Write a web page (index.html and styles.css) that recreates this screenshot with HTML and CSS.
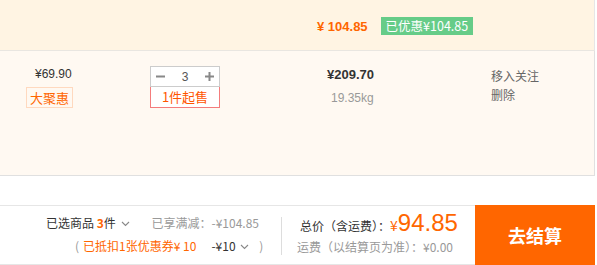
FILE: index.html
```html
<!DOCTYPE html>
<html lang="zh">
<head>
<meta charset="utf-8">
<link rel="stylesheet" href="styles.css">
</head>
<body>
<div class="cart">
  <div class="promo-row">
    <span class="promo-price">¥ 104.85</span>
    <span class="promo-tag">已优惠¥104.85</span>
  </div>
  <div class="item-row">
    <div class="col-price">
      <div class="unit-price">¥69.90</div>
      <span class="deal-tag">大聚惠</span>
    </div>
    <div class="col-qty">
      <div class="qty-box">
        <span class="qty-btn">
          <svg width="9" height="9" viewBox="0 0 9 9"><rect x="0" y="3.5" width="9" height="2" fill="#888"/></svg>
        </span>
        <span class="qty-num">3</span>
        <span class="qty-btn">
          <svg width="9" height="9" viewBox="0 0 9 9"><rect x="0" y="3.5" width="9" height="2" fill="#888"/><rect x="3.5" y="0" width="2" height="9" fill="#888"/></svg>
        </span>
      </div>
      <div class="qty-min">1件起售</div>
    </div>
    <div class="col-sum">
      <div class="sum">¥209.70</div>
      <div class="weight">19.35kg</div>
    </div>
    <div class="col-ops">
      <div class="op">移入关注</div>
      <div class="op">删除</div>
    </div>
  </div>
  <div class="spacer"></div>
  <div class="bar">
    <div class="bar-left">
      <div class="bar-line1">
        <span class="sel">已选商品 <b class="orange">3</b>件 <svg class="chev" width="9" height="6" viewBox="0 0 9 6"><path d="M1 1 L4.5 4.5 L8 1" fill="none" stroke="#888" stroke-width="1.1"/></svg></span>
        <span class="full-cut">已享满减：-¥104.85</span>
      </div>
      <div class="bar-line2">
        <span class="paren">(</span>
        <span class="orange">已抵扣1张优惠券¥ 10</span>
        <span class="coupon">-¥10 <svg class="chev" width="9" height="6" viewBox="0 0 9 6"><path d="M1 1 L4.5 4.5 L8 1" fill="none" stroke="#888" stroke-width="1.1"/></svg></span>
        <span class="paren">)</span>
      </div>
    </div>
    <div class="divider"></div>
    <div class="bar-total">
      <div class="total-line"><span class="total-label">总价（含运费）：</span><span class="total-yen">¥</span><span class="total-num">94.85</span></div>
      <div class="freight">运费（以结算页为准）：¥0.00</div>
    </div>
    <div class="checkout">去结算</div>
  </div>
</div>
</body>
</html>
```
FILE: styles.css
```css
* { box-sizing: border-box; }
html, body { margin: 0; padding: 0; background: #fff; }
body {
  font-family: "Noto Sans CJK SC", "Noto Sans", sans-serif;
  font-size: 12px;
  color: #333;
}
.cart { width: 595px; }
.promo-row {
  height: 51px;
  background: #fff4e3;
  border-right: 1px solid #e6e6e6;
  border-bottom: 1px solid #e9e6e1;
  display: flex;
  align-items: center;
  padding-left: 317px;
  padding-top: 2px;
}
.promo-price {
  font-family: "Liberation Sans", sans-serif;
  font-weight: bold;
  font-size: 13px;
  color: #ff6600;
}
.promo-tag {
  margin-left: 13px;
  background: #66cc88;
  color: #fff;
  height: 18px;
  line-height: 18px;
  padding: 0 5px;
  font-size: 12.5px;
  display: inline-flex;
  align-items: center;
}
.item-row {
  height: 125px;
  background: #fff9f2;
  border-right: 1px solid #e0e0e0;
  border-bottom: 1px solid #e0e0e0;
  display: flex;
  align-items: flex-start;
  padding-top: 15px;
}
.col-price { width: 150px; padding-left: 26px; }
.unit-price {
  font-family: "Liberation Sans", "Noto Sans CJK SC", sans-serif;
  font-size: 12px;
  color: #333;
  padding-left: 9px;
  line-height: 16px;
}
.deal-tag {
  display: inline-block;
  margin-top: 5px;
  height: 21px;
  line-height: 19px;
  padding: 0 3px;
  border: 1px solid #ffd9bf;
  color: #ff6600;
  font-size: 13px;
}
.col-qty { width: 177px; }
.qty-box {
  width: 70px;
  height: 21px;
  border: 1px solid #cccccc;
  background: #fff;
  display: flex;
  align-items: center;
  justify-content: space-between;
  padding: 0 5px;
}
.qty-btn { display: flex; align-items: center; }
.qty-num { font-family: "Liberation Sans", sans-serif; color: #555; font-size: 12px; }
.qty-min {
  width: 70px;
  height: 21px;
  border: 1px solid #f47c7c;
  border-top: none;
  background: #fff;
  color: #ff5500;
  text-align: center;
  line-height: 19px;
  font-size: 13px;
}
.col-sum { width: 164px; padding-top: 1px; }
.sum {
  font-family: "Liberation Sans", sans-serif;
  font-weight: bold;
  font-size: 13px;
  color: #333;
  line-height: 16px;
}
.weight {
  font-family: "Liberation Sans", sans-serif;
  color: #999;
  font-size: 12px;
  margin-top: 8px;
  padding-left: 4px;
}
.op { color: #666; font-size: 12px; line-height: 19px; }
.spacer { height: 29px; }
.bar {
  height: 60px;
  border-top: 1px solid #e6e6e6;
  border-bottom: 1px solid #e6e6e6;
  display: flex;
  align-items: stretch;
}
.bar-left { width: 281px; padding-left: 46px; padding-top: 7px; }
.bar-line1 { display: flex; align-items: center; height: 18px; }
.sel { color: #333; }
.sel b { font-weight: bold; }
.orange { color: #ff6600; }
.chev { margin-left: 2px; vertical-align: middle; }
.full-cut { color: #999; margin-left: 22px; }
.bar-line2 { display: flex; align-items: center; height: 18px; margin-top: 5px; margin-left: 29px; }
.paren { color: #999; }
.bar-line2 .orange { margin-left: 4px; }
.coupon { margin-left: 15px; color: #333; }
.bar-line2 .paren:last-child { margin-left: 10px; }
.divider { width: 1px; background: #ddd; margin: 11px 0 9px; }
.bar-total { width: 193px; padding-left: 18px; padding-top: 3px; }
.total-line { display: flex; align-items: baseline; height: 28px; }
.total-label { color: #333; font-size: 12px; }
.total-yen { color: #ff6600; font-size: 14px; }
.total-num { color: #ff6600; font-size: 24px; font-family: "Liberation Sans", sans-serif; }
.freight { color: #999; font-size: 12px; margin-left: -3px; margin-top: 1px; }
.checkout {
  width: 120px;
  background: #ff6600;
  color: #fff;
  font-size: 18px;
  font-weight: bold;
  display: flex;
  align-items: center;
  justify-content: center;
  margin: -1px 0;
}
```
